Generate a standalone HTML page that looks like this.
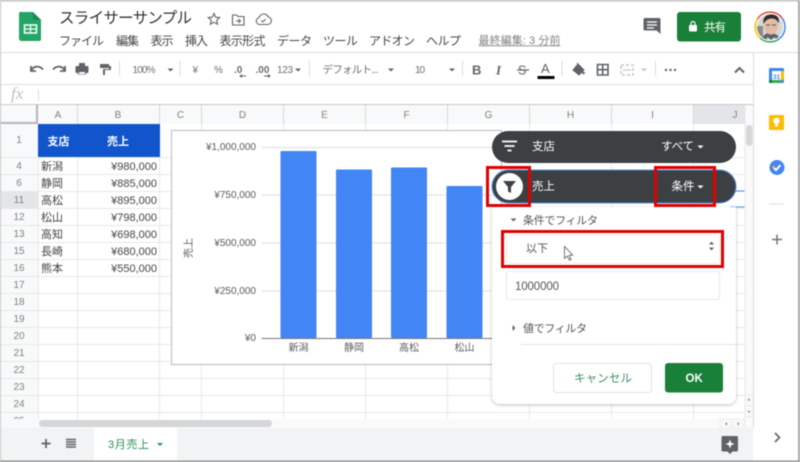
<!DOCTYPE html>
<html lang="ja"><head><meta charset="utf-8"><title>スライサーサンプル</title>
<style>
html,body{margin:0;padding:0;background:#fff;width:800px;height:462px;overflow:hidden}
svg{display:block;filter:blur(.45px)}
text{font-family:"Liberation Sans","Noto Sans CJK JP",sans-serif;fill:#3c4043}
.m{font-size:12px;fill:#444746}
.t{font-size:10px;fill:#6a6e72}
.h{font-size:10px;fill:#808080;text-anchor:middle}
.c{font-size:11px;fill:#444}
.r{font-size:11px;fill:#444;text-anchor:end}
.a{font-size:10px;fill:#5a5a5a;text-anchor:end}
.x{font-size:10px;fill:#5a5a5a;text-anchor:middle}
.g{stroke:#e8e8e8;stroke-width:1}
.i{fill:none;stroke:#5f6368;stroke-width:1.8}
</style></head><body>
<svg width="800" height="462" viewBox="0 0 800 462" xmlns="http://www.w3.org/2000/svg">
<rect width="800" height="462" fill="#fff"/>

<!-- title bar -->
<path d="M22 12h11l8 8v19a2 2 0 0 1-2 2H22a2.500 2.500 0 0 1-3-2V14a2 2 0 0 1 3-2z" fill="#23a566"/>
<path d="M33 12l8 8h-8z" fill="#1b8a52"/>
<rect x="24.500" y="25" width="12" height="8" fill="none" stroke="#fff" stroke-width="1.500"/><path d="M30.500 25v8M24.500 29h12" stroke="#fff" stroke-width="1.200"/>
<text x="59" y="23" style="font-size:15.500px;fill:#333" textLength="133">スライサーサンプル</text>
<path d="M214 13.500l1.700 3.700 4 .4-3 2.700.9 4-3.600-2.100-3.600 2.100.9-4-3-2.700 4-.4z" class="i" style="stroke-width:1.100"/>
<path d="M232.500 15h4l1.500 1.500h6v8.500h-11.500z" class="i" style="stroke-width:1.100"/><path d="M236 21h4M238.500 19l2 2-2 2" class="i" style="stroke-width:1"/>
<path d="M259.500 24.500a3.500 3.500 0 0 1-.5-6.900 5 5 0 0 1 9.300-.6 3.800 3.800 0 0 1-.3 7.500z" class="i" style="stroke-width:1.100"/><path d="M261 20.500l2 1.500 2.500-3" class="i" style="stroke-width:1"/>
<g class="m">
<text class="m" x="59" y="45" textLength="45">ファイル</text>
<text class="m" x="116" y="45" textLength="23">編集</text>
<text class="m" x="150.500" y="45" textLength="23">表示</text>
<text class="m" x="185" y="45" textLength="23">挿入</text>
<text class="m" x="219.500" y="45" textLength="46">表示形式</text>
<text class="m" x="277" y="45" textLength="35">データ</text>
<text class="m" x="323" y="45" textLength="35">ツール</text>
<text class="m" x="369" y="45" textLength="46">アドオン</text>
<text class="m" x="426" y="45" textLength="35">ヘルプ</text>
</g>
<text x="478.500" y="44" style="font-size:11px;fill:#808080" textLength="82">最終編集: 3 分前</text>
<path d="M478.500 45.800h82" stroke="#888" stroke-width=".8"/>
<path d="M645 18h14a1.500 1.500 0 0 1 1.500 1.500V34l-4-3.500H645a1.500 1.500 0 0 1-1.500-1.500v-9.500A1.500 1.500 0 0 1 645 18z" fill="#5f6368"/>
<path d="M647 22h10M647 25h10M647 28h7" stroke="#fff" stroke-width="1.200"/>
<rect x="677" y="12" width="64" height="29.500" rx="3" fill="#188038"/>
<rect x="689" y="25" width="8" height="6.500" rx="1" fill="#fff"/><path d="M691 25.500v-2a2 2 0 0 1 4 0v2" fill="none" stroke="#fff" stroke-width="1.200"/>
<text x="704" y="31" style="font-size:11.500px;fill:#fff" textLength="22">共有</text>

<!-- avatar -->
<defs><clipPath id="av"><circle cx="770" cy="27" r="13"/></clipPath></defs>
<circle cx="770" cy="27" r="15" fill="#fff"/>
<path d="M757.500 19A15 15 0 0 1 782 18" fill="none" stroke="#e0463a" stroke-width="1.500"/>
<path d="M782 18A15 15 0 0 1 779 39" fill="none" stroke="#4285f4" stroke-width="1.500"/>
<path d="M779 39A15 15 0 0 1 760 38" fill="none" stroke="#34a853" stroke-width="1.500"/>
<path d="M760 38A15 15 0 0 1 757.500 19" fill="none" stroke="#fbbc04" stroke-width="1.500"/>
<g clip-path="url(#av)">
<rect x="755" y="12" width="30" height="30" fill="#d3d8d6"/>
<rect x="757" y="26" width="6" height="14" fill="#8a8c7c"/>
<path d="M762 42c0-6 3-9 8-9s11 3 11 9z" fill="#5a6270"/>
<ellipse cx="771" cy="26" rx="7" ry="8.500" fill="#e3bba4"/>
<path d="M763.500 24c-1-7 3-9.500 8-9.500s8.500 2.500 7 9c-1-3-3-5-6.500-5s-6 1-8.500 5.500z" fill="#2e2e33"/>
<path d="M766 25h4M772 25h4" stroke="#555" stroke-width="1"/>
<path d="M767 37l4 3 4-3v6h-8z" fill="#eee"/>
</g>

<!-- frame lines for toolbar -->
<rect x="0" y="52" width="800" height="1" fill="#dcdcdc"/>
<rect x="0" y="84" width="753" height="1" fill="#e0e0e0"/>
<rect x="0" y="104" width="753" height="1" fill="#c8c8c8"/>
<rect x="753" y="52" width="1" height="376" fill="#dadce0"/>
<rect x="0" y="53" width="753" height="31" fill="#fff"/>

<!-- toolbar -->
<path d="M31 71c2-5 8-6 12-1.500M31 66v5h5" class="i"/>
<path d="M65 71c-2-5-8-6-12-1.500M65 66v5h-5" class="i"/>
<rect x="79" y="63" width="6" height="3" fill="#5f6368"/><rect x="75.500" y="66" width="13" height="7" rx="1" fill="#5f6368"/><rect x="78" y="71" width="8" height="3.500" fill="#5f6368"/><rect x="79" y="72" width="6" height="2" fill="#fff"/>
<path d="M100 64h9v4h-9z" fill="#5f6368"/><path d="M109 66h2v4h-6v5h-2v-6h6z" fill="#5f6368"/>
<path d="M119.500 61v15M180 61v15M309.500 61v15M462.500 61v15M562 61v15M655.500 61v15" stroke="#dadce0"/>
<text class="t" x="132.500" y="73" textLength="23">100%</text>
<path d="M167.500 68.500h6l-3 3z" fill="#5f6368"/>
<text class="t" x="192.500" y="73">¥</text>
<text class="t" x="214" y="73">%</text>
<text x="234" y="73" style="font-size:10px;fill:#6a6e72;font-weight:700">.0</text><path d="M240 76h6M242 74.500l-2 1.500 2 1.500" stroke="#5f6368" fill="none" stroke-width="1"/>
<text x="255.500" y="73" style="font-size:10px;fill:#6a6e72;font-weight:700">.00</text><path d="M264 76h6M268 74.500l2 1.500-2 1.500" stroke="#5f6368" fill="none" stroke-width="1"/>
<text class="t" x="277" y="73" textLength="16">123</text>
<path d="M295 68.500h6l-3 3z" fill="#5f6368"/>
<text x="322.500" y="73" style="font-size:10.500px;fill:#6a6e72" textLength="56">デフォルト...</text>
<path d="M388 68.500h6l-3 3z" fill="#5f6368"/>
<text class="t" x="415" y="73" textLength="10">10</text>
<path d="M449 68.500h6l-3 3z" fill="#5f6368"/>
<text x="472" y="74.500" style="font-size:13px;font-weight:700;fill:#5f6368">B</text>
<text x="496" y="74.500" style="font-size:13px;font-weight:700;font-style:italic;fill:#5f6368;font-family:'Liberation Serif',serif">I</text>
<text x="518" y="74.500" style="font-size:12.500px;fill:#5f6368">S</text><path d="M517 70h12" stroke="#5f6368" stroke-width="1.200"/>
<text x="541" y="73" style="font-size:13px;fill:#5f6368">A</text><rect x="537.500" y="76" width="17" height="3" fill="#000"/>
<path d="M578 64l6 6-5 5-6-5zM578 64l-1-1" fill="#5f6368" stroke="#5f6368"/><circle cx="583.500" cy="73" r="1.300" fill="#5f6368"/>
<path d="M597.500 64.500h10.500v10.500h-10.500zM602.700 64.500v10.500M597.500 69.700h10.500" class="i" style="stroke-width:1.600"/>
<path d="M621 65h12v10h-12z" fill="none" stroke="#c5c7c9" stroke-width="1.500" stroke-dasharray="3 2"/><path d="M623 70h8" stroke="#c5c7c9" stroke-width="1.200"/>
<path d="M641 68.500h6l-3 3z" fill="#c5c7c9"/>
<circle cx="666" cy="70" r="1.200" fill="#5f6368"/><circle cx="670.500" cy="70" r="1.200" fill="#5f6368"/><circle cx="675" cy="70" r="1.200" fill="#5f6368"/>
<path d="M735 72.500l4.500-4.500 4.500 4.500" fill="none" stroke="#5f6368" stroke-width="2"/>

<!-- formula -->
<text x="11" y="99" style="font-size:17px;font-style:italic;fill:#bdbdbd;font-family:'Liberation Serif',serif">fx</text>
<path d="M38.500 89v12" stroke="#dadce0"/>

<!-- column headers -->
<rect x="0" y="105" width="745" height="19" fill="#f8f9fa"/>
<rect x="693" y="105" width="52" height="19" fill="#e3e5e8"/>
<rect x="0" y="124" width="38" height="295" fill="#f8f9fa"/>
<rect x="0" y="191" width="38" height="17" fill="#e3e5e8"/>
<rect x="36" y="105" width="2" height="19" fill="#b6b6b6"/><rect x="0" y="122" width="38" height="2" fill="#b6b6b6"/>
<g stroke="#d8d8d8"><path d="M77.500 105v19M159.500 105v19M201.500 105v19M283.500 105v19M365.500 105v19M447.500 105v19M529.500 105v19M611.500 105v19M693.500 105v19M745 105v19"/></g>
<text class="h" x="58" y="118">A</text><text class="h" x="118" y="118">B</text><text class="h" x="180.500" y="118">C</text><text class="h" x="242.500" y="118">D</text><text class="h" x="324.500" y="118">E</text><text class="h" x="406.500" y="118">F</text><text class="h" x="488.500" y="118">G</text><text class="h" x="570.500" y="118">H</text><text class="h" x="652.500" y="118">I</text><text class="h" x="735" y="118">J</text>

<!-- grid -->
<g class="g">
<path d="M38.500 124v295M77.500 157v262M159.500 124v295M201.500 124v295M283.500 124v295M365.500 124v295M447.500 124v295M529.500 124v295M611.500 124v295M693.500 124v295"/>
<path d="M0 157.500h745M0 174.500h745M0 191.500h745M0 208.500h745M0 225.500h745M0 242.500h745M0 259.500h745M0 276.500h745M0 293.500h745M0 310.500h745M0 327.500h745M0 344.500h745M0 361.500h745M0 378.500h745M0 395.500h745M0 412.500h745"/>
</g>
<rect x="38" y="124" width="122" height="33" fill="#1155cc"/>
<text x="47.500" y="145" style="font-size:11px;font-weight:700;fill:#fff">支店</text>
<text x="107" y="145" style="font-size:11px;font-weight:700;fill:#fff">売上</text>
<g class="h">
<text class="h" x="19" y="143">1</text><text class="h" x="19" y="169">4</text><text class="h" x="19" y="186">6</text><text class="h" x="19" y="203">11</text><text class="h" x="19" y="220">12</text><text class="h" x="19" y="237">13</text><text class="h" x="19" y="254">15</text><text class="h" x="19" y="271">16</text><text class="h" x="19" y="288">17</text><text class="h" x="19" y="305">18</text><text class="h" x="19" y="322">19</text><text class="h" x="19" y="339">20</text><text class="h" x="19" y="356">21</text><text class="h" x="19" y="373">22</text><text class="h" x="19" y="390">23</text><text class="h" x="19" y="407">24</text><text class="h" x="19" y="424">25</text>
</g>
<text class="c" x="41" y="170">新潟</text><text class="r" x="157" y="170">¥980,000</text>
<text class="c" x="41" y="187">静岡</text><text class="r" x="157" y="187">¥885,000</text>
<text class="c" x="41" y="204">高松</text><text class="r" x="157" y="204">¥895,000</text>
<text class="c" x="41" y="221">松山</text><text class="r" x="157" y="221">¥798,000</text>
<text class="c" x="41" y="238">高知</text><text class="r" x="157" y="238">¥698,000</text>
<text class="c" x="41" y="255">長崎</text><text class="r" x="157" y="255">¥680,000</text>
<text class="c" x="41" y="272">熊本</text><text class="r" x="157" y="272">¥550,000</text>

<!-- chart -->
<rect x="171.500" y="130.500" width="330" height="234" fill="#fff" stroke="#b8b8b8"/>
<path d="M261.500 147.500h240M261.500 195h240M261.500 243h240M261.500 291h240" stroke="#e2e2e2" stroke-width="1.200"/>
<rect x="280.500" y="151" width="36" height="187" rx="1" fill="#4285f4"/>
<rect x="336" y="169.500" width="36" height="168.500" rx="1" fill="#4285f4"/>
<rect x="391" y="167.500" width="36" height="170.500" rx="1" fill="#4285f4"/>
<rect x="446.500" y="186" width="36" height="152" rx="1" fill="#4285f4"/>
<path d="M261.500 338.500h240" stroke="#777" stroke-width="1"/>
<text class="a" x="256" y="150">¥1,000,000</text>
<text class="a" x="256" y="198">¥750,000</text>
<text class="a" x="256" y="246">¥500,000</text>
<text class="a" x="256" y="294">¥250,000</text>
<text class="a" x="256" y="341">¥0</text>
<text class="x" x="298.500" y="351">新潟</text><text class="x" x="354" y="351">静岡</text><text class="x" x="409" y="351">高松</text><text class="x" x="464.500" y="351">松山</text>
<text transform="translate(192 258) rotate(-90)" style="font-size:10px;fill:#5a5a5a">売上</text>

<!-- selection lines -->
<path d="M730 191h15M730 207h15" stroke="#4d90e0" stroke-width="1"/>

<!-- slicer -->
<rect x="492" y="131" width="244" height="32" rx="16" fill="#3c4043"/>
<path d="M502 141.500h15M504.500 146h10M507.500 150.500h4" stroke="#fff" stroke-width="1.800"/>
<text x="532" y="150" style="font-size:11.500px;fill:#fff">支店</text>
<text x="661" y="150" style="font-size:11.500px;fill:#fff" textLength="33">すべて</text>
<path d="M697.500 145.500h6l-3 3z" fill="#fff"/>

<rect x="492" y="170" width="244" height="33" rx="16.500" fill="#3c4043" stroke="#4d90e0" stroke-width="1"/>
<circle cx="509.500" cy="186.500" r="13.500" fill="#fff"/>
<path d="M503 181h13l-5 6v6l-3-1.500V187z" fill="#3c4043"/>
<text x="532" y="190" style="font-size:11.500px;fill:#fff">売上</text>
<text x="671.500" y="190" style="font-size:11.500px;fill:#fff">条件</text>
<path d="M697.500 185.500h6l-3 3z" fill="#fff"/>

<!-- panel -->
<defs><filter id="sh" x="-10%" y="-10%" width="120%" height="120%"><feDropShadow dx="0" dy="1" stdDeviation="1.500" flood-color="#000" flood-opacity=".25"/></filter></defs>
<path d="M492 207h244v189a8 8 0 0 1-8 8H500a8 8 0 0 1-8-8z" fill="#fff" filter="url(#sh)"/>
<path d="M510.500 218.500h6l-3 3z" fill="#666"/>
<text x="523" y="224" style="font-size:11px;fill:#555" textLength="75">条件でフィルタ</text>
<rect x="506.500" y="235.500" width="213" height="28" rx="2" fill="#fff" stroke="#ececec"/>
<text x="526" y="252" style="font-size:11px;fill:#555">以下</text>
<path d="M709 244.500l2.500-3 2.500 3zM709 247.500l2.500 3 2.500-3z" fill="#5f6368"/>
<path d="M564.500 246.500v12l2.800-2.500 2 4.200 1.800-.8-2-4.100 3.600-.3z" fill="#fff" stroke="#555" stroke-width=".8"/>
<rect x="506.500" y="271.500" width="213" height="28" rx="2" fill="#fff" stroke="#e8e8e8"/>
<text x="515" y="290" style="font-size:11.500px;fill:#555" textLength="44">1000000</text>
<path d="M512.500 325l3 3-3 3z" fill="#666"/>
<text x="523" y="332" style="font-size:11px;fill:#555" textLength="64">値でフィルタ</text>
<path d="M521 344.500h215" stroke="#e4e4e4"/>
<rect x="553.500" y="363.500" width="98" height="29" rx="3" fill="#fff" stroke="#e2e2e2"/>
<text x="574" y="382" style="font-size:11.500px;fill:#3f8f5f" textLength="58">キャンセル</text>
<rect x="665" y="363" width="58" height="29.500" rx="3" fill="#188038"/>
<text x="685.500" y="382" style="font-size:11.500px;fill:#fff;font-weight:700">OK</text>

<!-- red boxes -->
<g fill="none" stroke="#e00000" stroke-width="3">
<rect x="487.500" y="167.500" width="42" height="38"/>
<rect x="655.500" y="167.500" width="59" height="38"/>
<rect x="502.500" y="231.500" width="220" height="35"/>
</g>

<!-- v scrollbar -->
<rect x="745" y="105" width="8" height="323" fill="#fafafa"/>
<path d="M745 105v323" stroke="#e8e8e8"/>
<rect x="746" y="125" width="6.500" height="21" rx="3" fill="#d6d8da"/>
<rect x="745" y="395" width="8" height="11" fill="#f8f8f8" stroke="#e4e4e4" stroke-width=".6"/>
<rect x="745" y="406" width="8" height="11" fill="#f8f8f8" stroke="#e4e4e4" stroke-width=".6"/>
<path d="M747.500 400.500l1.500-2 1.500 2zM747.500 411l1.500 2 1.500-2z" fill="#888"/>

<!-- h scrollbar -->
<rect x="0" y="419" width="745" height="9" fill="#fafafa"/>
<rect x="0" y="419" width="38" height="9" fill="#f8f9fa"/>
<rect x="39" y="420" width="233" height="7" rx="3.500" fill="#d5d6d8"/>
<rect x="720" y="419" width="12" height="9" fill="#f8f8f8" stroke="#e4e4e4" stroke-width=".6"/>
<rect x="732" y="419" width="12" height="9" fill="#f8f8f8" stroke="#e4e4e4" stroke-width=".6"/>
<path d="M727 422l-2 1.800 2 1.800zM737.500 422l2 1.800-2 1.800z" fill="#888"/>

<!-- bottom bar -->
<rect x="0" y="428" width="753" height="33" fill="#f1f3f4"/>
<path d="M41.500 443.500h9M46 439v9" stroke="#5f6368" stroke-width="1.800"/>
<path d="M66 439.500h10M66 442h10M66 444.500h10M66 447h10" stroke="#5f6368" stroke-width="1.400"/>
<rect x="94" y="428" width="83" height="33" fill="#fff"/>
<text x="108" y="448" style="font-size:11px;fill:#2e8b57" textLength="41">3月売上</text>
<path d="M157 443h6l-3 3z" fill="#2e8b57"/>
<path d="M723 436h13.500a1.500 1.500 0 0 1 1.500 1.500V450a1.500 1.500 0 0 1-1.500 1.500h-4l-2.500 2.500-2.500-2.500H723a1.500 1.500 0 0 1-1.500-1.500v-12.500A1.500 1.500 0 0 1 723 436z" fill="#5f6368"/>
<path d="M730 439.500l1.200 3.300 3.300 1.200-3.300 1.200-1.200 3.300-1.200-3.300-3.300-1.200 3.300-1.200z" fill="#fff"/>

<!-- right side -->
<rect x="754" y="53" width="44" height="408" fill="#fff"/>
<rect x="769" y="68" width="15" height="15" rx="1" fill="#4285f4"/>
<rect x="772" y="71" width="9" height="9" fill="#fff"/>
<rect x="781" y="71" width="3" height="9" fill="#fbbc04"/><rect x="772" y="80" width="9" height="3" fill="#34a853"/><rect x="769" y="80" width="3" height="3" fill="#188038"/>
<text x="773" y="79" style="font-size:6.500px;fill:#4285f4;font-weight:700">31</text>
<rect x="769" y="115" width="15" height="15" rx="1" fill="#fbbc04"/>
<circle cx="776.500" cy="121" r="3.200" fill="#fff"/><rect x="775" y="124.500" width="3" height="2" fill="#fff"/>
<circle cx="777" cy="167.500" r="7.500" fill="#4285f4"/>
<path d="M774 168l2 2 4.500-5" fill="none" stroke="#fff" stroke-width="2"/><circle cx="773.500" cy="167" r="1.300" fill="#fbbc04"/>
<path d="M769 204h15" stroke="#dadce0"/>
<path d="M772 239.500h10M777 234.500v10" stroke="#757575" stroke-width="1.500"/>
<path d="M775 433l4.500 4.500-4.500 4.500" fill="none" stroke="#5f6368" stroke-width="1.600"/>

<!-- screenshot frame -->
<rect x="0" y="0" width="800" height="1.500" fill="#bdbdbd"/>
<rect x="0" y="0" width="1" height="462" fill="#c4c4c4"/>
<rect x="798" y="0" width="2" height="462" fill="#a8a8a8"/>
<rect x="0" y="460.500" width="800" height="1.500" fill="#8f8f8f"/>
</svg>
</body></html>
